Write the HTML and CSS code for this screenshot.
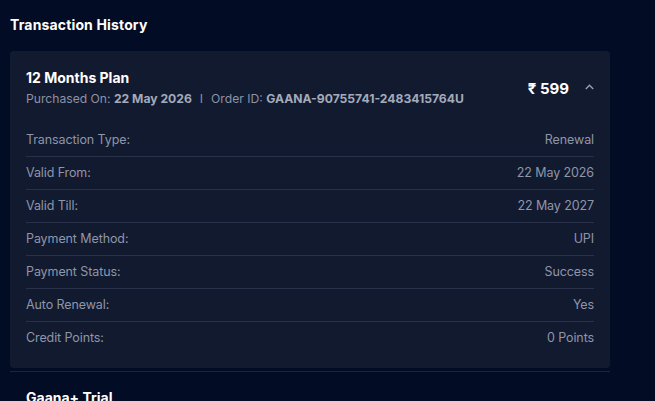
FILE: index.html
```html
<!DOCTYPE html>
<html>
<head>
<meta charset="utf-8">
<link rel="stylesheet" href="styles.css">
</head>
<body>
<div class="page">
  <h2 class="title">Transaction History</h2>
  <div class="card">
    <div class="head">
      <div class="head-info">
        <div class="plan">12 Months Plan</div>
        <div class="meta">Purchased On: <b>22 May 2026</b><span class="sep">I</span>Order ID: <b>GAANA-90755741-2483415764U</b></div>
      </div>
      <div class="price">₹ 599</div>
      <svg class="chev" width="9" height="6" viewBox="0 0 9 6"><path d="M0.8 5 L4.5 1.2 L8.2 5" fill="none" stroke="#9aa2b4" stroke-width="1.3"/></svg>
    </div>
    <div class="rows">
      <div class="row"><span>Transaction Type:</span><span>Renewal</span></div>
      <div class="row"><span>Valid From:</span><span>22 May 2026</span></div>
      <div class="row"><span>Valid Till:</span><span>22 May 2027</span></div>
      <div class="row"><span>Payment Method:</span><span>UPI</span></div>
      <div class="row"><span>Payment Status:</span><span>Success</span></div>
      <div class="row"><span>Auto Renewal:</span><span>Yes</span></div>
      <div class="row"><span>Credit Points:</span><span>0 Points</span></div>
    </div>
  </div>
  <div class="divider"></div>
  <div class="item">
    <div class="plan">Gaana+ Trial</div>
  </div>
</div>
</body>
</html>
```
FILE: styles.css
```css
html, body {
  margin: 0;
  padding: 0;
  background: #020c24;
  font-family: Inter, "Noto Sans", sans-serif;
  overflow: hidden;
}
.page {
  width: 600px;
  padding: 15px 10px 0;
}
.title {
  margin: 0 0 16px;
  font-size: 14px;
  line-height: 20px;
  font-weight: 700;
  color: #ffffff;
  letter-spacing: 0.15px;
}
.card {
  background: #121a30;
  border-radius: 4px;
  padding: 18px 16px 14px;
}
.head {
  display: flex;
  align-items: center;
}
.head-info {
  flex: 1;
}
.plan {
  font-size: 14px;
  line-height: 18px;
  font-weight: 700;
  color: #ffffff;
  letter-spacing: 0;
}
.meta {
  margin-top: 4px;
  font-size: 12.15px;
  line-height: 16px;
  color: #8b93a5;
  letter-spacing: 0;
}
.meta b {
  color: #a3abbb;
  font-weight: 700;
}
.sep {
  margin: 0 8px 0 8px;
}
.price {
  font-size: 15px;
  font-weight: 700;
  color: #ffffff;
  margin-right: 16px;
}
.chev {
  margin-top: -3px;
}
.rows {
  margin-top: 17px;
}
.row {
  display: flex;
  justify-content: space-between;
  padding: 8px 0;
  font-size: 12.5px;
  line-height: 16px;
  color: #8e96a8;
  letter-spacing: -0.1px;
  border-bottom: 1px solid #28304a;
}
.row:last-child {
  border-bottom: none;
}
.divider {
  height: 1px;
  background: #1c2540;
  margin-top: 3px;
}
.item {
  padding: 17px 16px;
}
```
